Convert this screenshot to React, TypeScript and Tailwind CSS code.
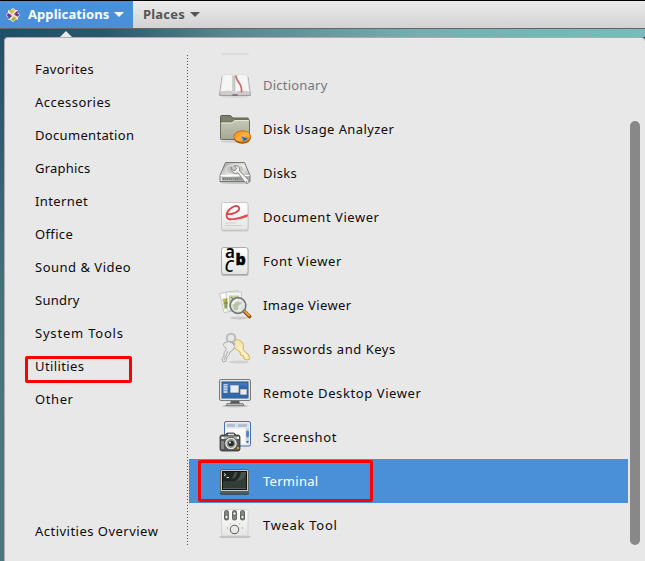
import React from "react";

const uiFont = "font-['Noto_Sans','Open_Sans',sans-serif]";

const categories = [
  ["Favorites", "tracking-[0.4px]"],
  ["Accessories", "tracking-[0.47px]"],
  ["Documentation", "tracking-[0.32px]"],
  ["Graphics", "tracking-[0.2px]"],
  ["Internet", "tracking-[0.4px]"],
  ["Office", "tracking-[0.35px]"],
  ["Sound & Video", "tracking-[0.5px]"],
  ["Sundry", "tracking-[0.25px]"],
  ["System Tools", "tracking-[0.8px]"],
  ["Utilities", "tracking-[0.4px]"],
  ["Other", "tracking-[0.6px]"],
];

function Icon({ children }: { children: React.ReactNode }) {
  return (
    <svg width="32" height="32" viewBox="0 0 32 32" className="shrink-0 overflow-visible">
      {children}
    </svg>
  );
}

const DictionaryIcon = () => (
  <Icon>
    <g opacity="0.68">
      <ellipse cx="16" cy="27.5" rx="14" ry="1.5" fill="#aaa" opacity="0.4" />
      <path d="M3 8 0.5 26.5h31L29 8Z" fill="#c6b5c3" stroke="#7a5a76" strokeWidth=".8" />
      <path d="M3.500 6.500Q11 4 16 7 21 4 28.500 6.500L30.500 23Q21 21 16 23.500 11 21 1.500 23Z" fill="#fcfcfc" stroke="#c8c8c8" strokeWidth=".6" />
      <path d="M1.800 22.600Q11 20.500 16 23.500 21 20.500 30.200 22.600v2.600H1.800Z" fill="#bfc3bc" />
      <path d="M14.500 7v15.500" stroke="#c4c4c4" strokeWidth="3" />
      <path d="M15.800 7.500v15" stroke="#999" strokeWidth=".7" />
      <path d="M16.500 6.500q1 4 4 8 2.500 3.500 2 9" fill="none" stroke="#b93438" strokeWidth="1.700" />
      <path d="M13.500 26h5" stroke="#432b45" strokeWidth="1.600" />
    </g>
  </Icon>
);

const DiskUsageIcon = () => (
  <Icon>
    <ellipse cx="16" cy="28.500" rx="15" ry="1.500" fill="#999" opacity="0.3" />
    <path d="M1.500 12V3.500q0-1 1-1h9l2.500 2.500h14.500q1 0 1 1V14H1.500Z" fill="#7d806f" stroke="#5d604f" />
    <path d="M1.500 26V10q0-1 1-1h10l3-2.500h14q1 0 1 1V26q0 .5-1 .5H2.500q-1 0-1-.5Z" fill="url(#folder)" stroke="#6c6f5e" />
    <path d="M2.500 10h10.500l3-2.500h13.500" stroke="#e4e6d7" fill="none" />
    <ellipse cx="23.300" cy="25" rx="8.500" ry="5.800" fill="#9b4d02" />
    <ellipse cx="23.300" cy="23.500" rx="8.400" ry="5.700" fill="url(#orange)" stroke="#c86405" strokeWidth=".8" />
    <path d="M22.500 23.500 29 25q-1 2.500-4.500 3.500Z" fill="#3468aa" stroke="#83a6d1" strokeWidth=".6" />
  </Icon>
);

const DisksIcon = () => (
  <Icon>
    <ellipse cx="16" cy="25.500" rx="15" ry="1.300" fill="#888" opacity="0.45" />
    <path d="M6.500 5.500h19l5.500 13v6H1v-6Z" fill="url(#silver)" stroke="#777a77" />
    <ellipse cx="16" cy="12.500" rx="9" ry="5" fill="#c5c7c5" stroke="#eee" strokeWidth=".7" />
    <path d="M1.500 18.500h29" stroke="#fff" />
    <path d="M3 20h26v3.500H3Z" fill="#979a97" />
    <path d="M4 22h9M16 22h4" stroke="#666" strokeDasharray="1 1" />
    <path d="M12 10q-1 4 3 6 2 1 4-.3l7.200 10q2 2 3.500-.2 1-1.500-.5-3L20.500 14q1-4-3-5.300l-2-.2 2 3.200-1.500 2-2.500-.5Z" fill="#f0f0f0" stroke="#808380" strokeWidth=".9" />
    <circle cx="27.500" cy="25" r=".8" fill="#777" />
  </Icon>
);

const DocumentIcon = () => (
  <Icon>
    <rect x="2.500" y="2.500" width="27" height="28" rx="2" fill="#aaa" opacity="0.5" />
    <rect x="2.500" y="1.500" width="26.500" height="27.500" rx="2" fill="url(#paper)" stroke="#c8c8c8" />
    <path d="M8 13C13 14 22 10 20 6.500 17.500 2.500 8 8 7.500 14.500q0 5 7.500 3.500 7-1 13.500-4" fill="none" stroke="#de3a43" strokeWidth="1.700" />
    <path d="M9 17q6 3 19.500-3.500v2.500Q14 21 9 17Z" fill="#e65058" />
    <path d="M6 22h11M6 24.500h17" stroke="#ccc" strokeWidth=".8" />
  </Icon>
);

const FontIcon = () => (
  <Icon>
    <rect x="2.500" y="3" width="27" height="28" rx="2" fill="#888" opacity="0.5" />
    <rect x="2.500" y="2.500" width="26.500" height="27" rx="2.500" fill="url(#paper)" stroke="#aaa" />
    <text x="6" y="13" fontFamily="Noto Sans" fontSize="17" fontWeight="600">a</text>
    <text x="16.500" y="20" fontFamily="Noto Sans" fontSize="16" fontWeight="900" stroke="#000" strokeWidth=".4">b</text>
    <text x="5.500" y="27" fontFamily="Noto Sans" fontSize="21" fontStyle="italic">c</text>
  </Icon>
);

const ImageIcon = () => (
  <Icon>
    <ellipse cx="20" cy="29" rx="9" ry="1.500" fill="#aaa" opacity="0.5" />
    <path d="M.5 4.500 19 1.500l4 19-18 3Z" fill="#fafafa" stroke="#bababa" strokeWidth=".8" />
    <path d="M7 3h15.500v20L8 21Z" fill="#f5f5ef" stroke="#bbb" strokeWidth=".7" />
    <path d="M3.500 10l5-1v10l-3 1Z" fill="#a7bb80" />
    <path d="M10 6.500h10v12H10Z" fill="#c4cba9" />
    <path d="M5 14h4M7 10v9M12 8l3 3M17 9h3" stroke="#6c883a" />
    <circle cx="5" cy="11" r="1.500" fill="#e5b832" />
    <path d="m25 22 5.500 5.500" stroke="#8c4c08" strokeWidth="3.800" strokeLinecap="round" />
    <path d="m25 21.500 5 5" stroke="#e7a047" strokeWidth="2" strokeLinecap="round" />
    <circle cx="19" cy="16.500" r="7.700" fill="#dde6df" fillOpacity=".65" stroke="#717673" strokeWidth="1.900" />
    <circle cx="19" cy="16.500" r="6.500" fill="none" stroke="#e4e8e6" />
    <path d="M14 16q4-5 9-2l-4 3v4h-4Z" fill="#b7c4a8" />
    <path d="M14 15q1-4 5-4" stroke="#fff" strokeWidth="1.500" fill="none" />
  </Icon>
);

const KeysIcon = () => (
  <Icon>
    <ellipse cx="20" cy="29" rx="10" ry="1.500" fill="#aaa" opacity="0.4" />
    <path d="M14 8q5-3 9 1 3 4 1 8l5 4 2 5-3 1-3-1-.5-3-3-1-.5-3-4-3Q12 15 14 8Z" fill="#f6e7b7" stroke="#d9b84e" />
    <path d="m20 14 8 10" stroke="#fff8d4" strokeWidth="1.500" />
    <circle cx="12" cy="5" r="4.200" fill="none" stroke="#a5a8a5" strokeWidth="2" />
    <circle cx="12" cy="5" r="4.200" fill="none" stroke="#dcdddc" strokeWidth=".8" />
    <path d="M5 10q5-3 9 0 3 4 0 7l-3 2-1 3-2 2-1 4-3 1-1-3 2-3v-3l2-3v-2Q3 13 5 10Z" fill="#eaeaea" stroke="#acaeac" />
    <path d="m9 18-4 9" stroke="#949694" strokeWidth=".8" />
    <path d="M11 9.500q3-1 5 2" stroke="#aaa" fill="none" strokeWidth="1.500" />
  </Icon>
);

const MonitorIcon = () => (
  <Icon>
    <ellipse cx="16" cy="29" rx="13" ry="1.500" fill="#888" opacity="0.4" />
    <path d="M12 23h8l1 4H11Z" fill="#555b58" />
    <path d="M8 26.500h16l1 2H7Z" fill="#bbb" stroke="#666" strokeWidth=".7" />
    <rect x=".5" y="2.500" width="31" height="21" rx="1.500" fill="#e7e8e7" stroke="#777c7a" />
    <rect x="3" y="5" width="26" height="16" fill="#3e78be" stroke="#234f87" />
    <path d="M3 15Q16 5 29 10v11H3Z" fill="#3167ab" />
    <path d="M4.500 7h4v9h-4Z" fill="#b9cde3" />
    <path d="M4.500 8.500h4M4.500 11h4M4.500 13.500h4" stroke="#7593b8" strokeWidth=".7" />
    <rect x="11" y="8" width="9" height="8" fill="#e9ebed" stroke="#46638a" strokeWidth=".7" />
    <rect x="21" y="12" width="7" height="6" fill="#e9ebed" stroke="#46638a" strokeWidth=".7" />
    <path d="M11.500 8.500h8M21.500 12.500h6" stroke="#bbc3cb" />
  </Icon>
);

const CameraIcon = () => (
  <Icon>
    <rect x="5.500" y=".5" width="26" height="24.500" rx="1.500" fill="#e9eef4" stroke="#4770a7" />
    <path d="M7 2h23v4.500H7Z" fill="#d6e1ed" />
    <path d="M8 4.500h8M19 4.500h9" stroke="#b5c0cc" strokeWidth="3" />
    <path d="M7 8h19v15H7Z" fill="#fafafa" />
    <path d="M28.500 7v16" stroke="#ccd4dc" strokeWidth="3" />
    <path d="M28.500 11v4" stroke="#598ac5" strokeWidth="3" strokeLinecap="round" />
    <path d="m27 20 1.500 2 1.500-2Z" fill="#345b8a" />
    <path d="M1 16q0-2 2-2h3l2-2h7l2 2h2q2 0 2 2v12q0 2-2 2H3q-2 0-2-2Z" fill="#555855" stroke="#303330" strokeWidth=".8" />
    <path d="M2 15.500h18v2.500H2Z" fill="#b4b8b4" />
    <path d="M9 13.500h6" stroke="#ddd" strokeWidth="1.500" />
    <path d="M2 20h3v8H2Z" fill="#858985" />
    <circle cx="12" cy="22.500" r="6.300" fill="#dedfde" stroke="#595c59" />
    <circle cx="12" cy="22.500" r="4.400" fill="#8f938f" />
    <circle cx="12" cy="22.500" r="2.800" fill="#252825" />
    <circle cx="11" cy="21.500" r="1" fill="#f4f6f4" />
    <path d="M18 26h2v2h-2Z" fill="#f09b27" />
    <path d="M3 17h2M18 17h2" stroke="#fff" strokeWidth="1.500" />
  </Icon>
);

const TerminalIcon = () => (
  <Icon>
    <rect x="1" y="6" width="29" height="24" rx="1.500" fill="#343a40" opacity=".7" />
    <rect x="1.500" y="4.500" width="28" height="23" rx="1.500" fill="#c7cac7" stroke="#626762" />
    <path d="M2 26h27v2H2Z" fill="#575d5b" />
    <rect x="3.500" y="6.500" width="24" height="18" fill="#202824" stroke="#101210" />
    <path d="M4 16q13 2 23-5v12H4Z" fill="#3b4641" opacity=".7" />
    <path d="m16 7-3 7q5-1 5-7Zm6 0q-1 6-5 9 8-1 10-7V7Z" fill="#58645e" opacity=".7" />
    <path d="M4 23h23v1H4Z" fill="#536059" />
    <path d="m5 8.500 1.800 1.200L5 11M7.500 12.500h2.500" fill="none" stroke="#edf3ef" strokeWidth=".9" />
  </Icon>
);

const TweakIcon = () => (
  <Icon>
    <path d="M0 27h32l-2 2H2Z" fill="#888" opacity=".4" />
    <rect x="2.500" y=".5" width="26.500" height="26.500" rx="1.500" fill="url(#paper)" stroke="#cdcecb" strokeWidth=".8" />
    {[5, 13, 21].map((x, i) => (
      <g key={x}>
        <rect x={x} y="1" width="5" height="10.500" rx="2.500" fill="#646965" />
        <rect x={x + 1} y="2" width="3" height="8.500" rx="1.500" fill="#858985" />
        <circle cx={x + 2.500} cy={i === 1 ? 4.500 : 8} r="1.700" fill="#f1f1ee" stroke="#454845" strokeWidth=".7" />
      </g>
    ))}
    <path d="M8 19h1M23 19h1M11 15h.8M20 15h.8" stroke="#929591" />
    <circle cx="15.500" cy="20.500" r="4.200" fill="#e9eae6" stroke="#676c68" strokeWidth="1.100" />
    <path d="M13.500 24.500h4" stroke="#656965" />
  </Icon>
);

const apps = [
  { name: "Dictionary", icon: DictionaryIcon, tone: "text-[#777] tracking-[0.22px]" },
  { name: "Disk Usage Analyzer", icon: DiskUsageIcon, tone: "tracking-[0.41px]" },
  { name: "Disks", icon: DisksIcon, tone: "tracking-[0.4px]" },
  { name: "Document Viewer", icon: DocumentIcon, tone: "tracking-[0.54px]" },
  { name: "Font Viewer", icon: FontIcon, tone: "tracking-[0.65px]" },
  { name: "Image Viewer", icon: ImageIcon, tone: "tracking-[0.4px]" },
  { name: "Passwords and Keys", icon: KeysIcon, tone: "tracking-[0.54px]" },
  { name: "Remote Desktop Viewer", icon: MonitorIcon, tone: "tracking-[0.6px]" },
  { name: "Screenshot", icon: CameraIcon, tone: "tracking-[0.6px]" },
  { name: "Terminal", icon: TerminalIcon, tone: "text-white tracking-[0.28px]" },
  { name: "Tweak Tool", icon: TweakIcon, tone: "tracking-[0.7px]" },
];

function Caret() {
  return <svg width="10" height="5" viewBox="0 0 10 5" className="shrink-0"><path d="M0 0h10L5 5Z" fill="currentColor" /></svg>;
}

function CentOSLogo() {
  return (
    <svg width="14" height="14" viewBox="0 0 14 14" className="shrink-0">
      <path d="M2 2h10v10H2ZM7 0l2.500 2h-5ZM14 7l-2 2.500v-5ZM7 14l-2.500-2h5ZM0 7l2-2.500v5Z" fill="#f4efe5" />
      <path d="M2.300 2.300h4.200v4.200Z" fill="#a4c43c" />
      <path d="M11.700 2.300v4.200H7.500Z" fill="#a02480" />
      <path d="M2.300 11.700V7.500h4.200Z" fill="#514898" />
      <path d="M11.700 11.700H7.500V7.500Z" fill="#efa027" />
      <path d="m7 .5 1.800 2L7 5.500l-1.800-3Z" fill="#efb63b" />
      <path d="m13.500 7-2 1.800-3-1.800 3-1.800Z" fill="#51458d" />
      <path d="m7 13.500-1.800-2L7 8.500l1.800 3Z" fill="#97bd37" />
      <path d="m.5 7 2-1.800 3 1.800-3 1.800Z" fill="#98247b" />
    </svg>
  );
}

export default function App() {
  return (
    <div className={`relative flex h-[561px] w-[645px] flex-col overflow-hidden bg-[linear-gradient(180deg,#1d5067_29px,#43747b_300px,#487a7d_561px)] text-[13px] leading-none text-[#0b0b0b] ${uiFont}`}>
      <svg width="0" height="0" className="absolute">
        <defs>
          <linearGradient id="folder" x2="0" y2="1"><stop stopColor="#c6c9b6" /><stop offset="1" stopColor="#a4a894" /></linearGradient>
          <linearGradient id="orange" x2="1" y2="1"><stop stopColor="#f27e08" /><stop offset=".5" stopColor="#ffb345" /><stop offset="1" stopColor="#ed7900" /></linearGradient>
          <linearGradient id="silver" x2="1" y2="1"><stop stopColor="#999c99" /><stop offset=".5" stopColor="#eeeeed" /><stop offset="1" stopColor="#999c99" /></linearGradient>
          <linearGradient id="paper" x2="0" y2="1"><stop stopColor="#fff" /><stop offset="1" stopColor="#e4e5e2" /></linearGradient>
        </defs>
      </svg>
      <header className="flex h-[29px] shrink-0 border-t border-b border-t-black border-b-[#666] bg-linear-to-b from-[#ececec] to-[#d2d2d2] text-[13px] font-bold">
        <div className="flex w-[133px] items-center bg-[#4a90d9] pl-[6px] text-white">
          <CentOSLogo />
          <span className="ml-2 w-[86px] whitespace-nowrap tracking-[0.08px]">Applications</span>
          <Caret />
        </div>
        <div className="flex items-center pl-[10px] text-[#555]">
          <span className="w-[47px] whitespace-nowrap tracking-[0.2px]">Places</span>
          <Caret />
        </div>
      </header>
      <div className="flex h-2 shrink-0 items-end bg-[linear-gradient(90deg,#1d5067,#28586b_16%,#57858e_35%,#78adb0_65%,#7bbaba)] pl-[60px]">
        <svg width="12" height="6" viewBox="0 0 12 6"><path d="M0 6 6 0l6 6Z" fill="#e8e8e8" /></svg>
      </div>
      <main className="ml-1 flex min-h-0 grow rounded-t-[4px] border-t border-l border-[#b0a9ae] bg-[#e8e8e8]">
        <nav className="flex w-[182px] shrink-0 flex-col pt-[15px] pl-[30px]">
          {categories.map(([name, spacing]) => (
            <div key={name} className="flex h-[33px] shrink-0 items-center">
              <span className={`whitespace-nowrap ${spacing}`}>{name}</span>
            </div>
          ))}
          <div className="mt-[99px] flex h-[33px] shrink-0 items-center"><span className="whitespace-nowrap tracking-[0.48px]">Activities Overview</span></div>
        </nav>
        <div className="mt-[17px] h-[490px] w-px shrink-0 bg-[repeating-linear-gradient(180deg,#555_0_1px,transparent_1px_3px)]" />
        <section className="ml-px w-[439px] shrink-0 pt-[15px]">
          <div className="flex h-[10px] pl-[32px]"><div className="h-[2px] w-[28px] rounded-full bg-[#dcdcdc] blur-[0.5px]" /></div>
          {apps.map(({ name, icon: AppIcon, tone }) => (
            <div key={name} className={`flex h-11 items-center gap-3 pl-[30px] ${name === "Terminal" ? "bg-[#4a90d9]" : ""}`}>
              <AppIcon />
              <span className={`whitespace-nowrap ${tone}`}>{name}</span>
            </div>
          ))}
        </section>
        <div className="mt-[83px] ml-[2px] h-[424px] w-[10px] shrink-0 rounded-full bg-[#888]" />
      </main>
      <div className="absolute top-[356px] left-[25px] h-[27px] w-[107px] rounded-[2px] border-3 border-[#f00]" />
      <div className="absolute top-[460px] left-[198px] h-[42px] w-[175px] rounded-[2px] border-3 border-[#f00]" />
    </div>
  );
}
